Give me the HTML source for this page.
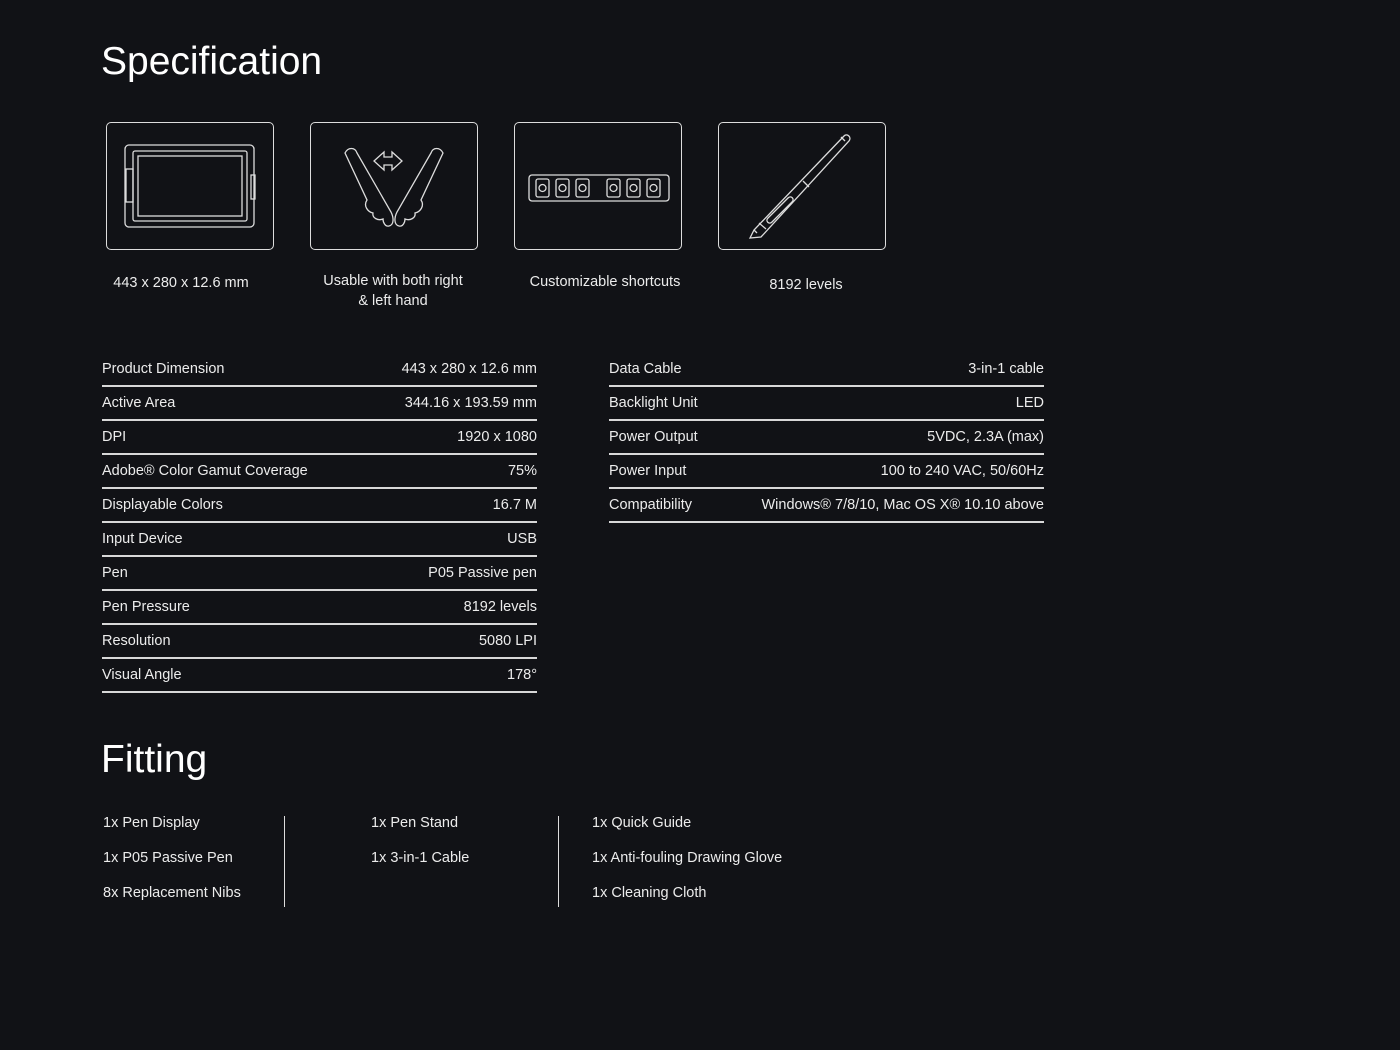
<!DOCTYPE html>
<html><head><meta charset="utf-8"><style>
body{margin:0;background:#111216;width:1400px;height:1050px;position:relative;overflow:hidden;font-family:"Liberation Sans",sans-serif;color:#ececec}
h1{position:absolute;margin:0;font-weight:400;font-size:39px;color:#fff;line-height:1}
.box{position:absolute;top:122px;width:166px;height:126px;border:1.5px solid #ddd;border-radius:5px}
.cap{position:absolute;font-size:14.5px;text-align:center;width:200px;line-height:20px}
.tbl{position:absolute;width:435px}
.row{height:32px;border-bottom:2px solid #d8d8d8;display:flex;justify-content:space-between;align-items:center;font-size:14.5px}
.fit{position:absolute;font-size:14.5px;line-height:35px}
.vl{position:absolute;width:1px;background:#ddd;top:816px;height:91px}
</style></head><body>
<h1 style="left:101px;top:42px">Specification</h1>

<div class="box" style="left:106px"><svg width="166" height="126" fill="none" stroke="#ddd" stroke-width="1.3">
<rect x="18" y="22" width="129" height="82" rx="4"/><rect x="26" y="28" width="114" height="70" rx="2"/><rect x="31" y="33" width="104" height="60"/>
<rect x="19" y="46" width="7" height="33"/><rect x="144" y="52" width="4" height="24"/></svg></div>
<div class="box" style="left:310px"><svg width="166" height="126" fill="none" stroke="#ddd" stroke-width="1.3">
<path d="M34 30c3-6 10-6 12 0l34 59c3 6 3 13-2 14c-4 1-6-4-6-7c-5 2-11-1-10-6c-5-1-10-7-6-13z"/>
<path d="M132 30c-3-6-10-6-12 0l-34 59c-3 6-3 13 2 14c4 1 6-4 6-7c5 2 11-1 10-6c5-1 10-7 6-13z"/>
<path d="M63 38l10-9v5h8v-5l10 9l-10 9v-5h-8v5z"/></svg></div>
<div class="box" style="left:514px"><svg width="166" height="126" fill="none" stroke="#ddd" stroke-width="1.3">
<rect x="14" y="52" width="140" height="26" rx="3"/>
<g><rect x="21" y="56" width="13" height="18" rx="2"/><circle cx="27.5" cy="65" r="3.5"/>
<rect x="41" y="56" width="13" height="18" rx="2"/><circle cx="47.5" cy="65" r="3.5"/>
<rect x="61" y="56" width="13" height="18" rx="2"/><circle cx="67.5" cy="65" r="3.5"/>
<rect x="92" y="56" width="13" height="18" rx="2"/><circle cx="98.5" cy="65" r="3.5"/>
<rect x="112" y="56" width="13" height="18" rx="2"/><circle cx="118.5" cy="65" r="3.5"/>
<rect x="132" y="56" width="13" height="18" rx="2"/><circle cx="138.5" cy="65" r="3.5"/></g></svg></div>
<div class="box" style="left:718px"><svg width="166" height="126" fill="none" stroke="#ddd" stroke-width="1.3">
<path d="M31 115l4-8l90-94c3-3 8 1 5 5l-88 96z"/><path d="M35 107l3 3"/><path d="M40 100l7 6"/><path d="M84 58l6 6"/>
<path d="M49 95l20-20c3-3 7 1 4 4l-20 20c-3 3-7-1-4-4z"/><path d="M122 14l4 4"/></svg></div>

<div class="cap" style="left:81px;top:273px">443 x 280 x 12.6 mm</div>
<div class="cap" style="left:293px;top:271px">Usable with both right<br>&amp; left hand</div>
<div class="cap" style="left:505px;top:272px">Customizable shortcuts</div>
<div class="cap" style="left:706px;top:275px">8192 levels</div>

<div class="tbl" style="left:102px;top:353px">
<div class="row"><span>Product Dimension</span><span>443 x 280 x 12.6 mm</span></div>
<div class="row"><span>Active Area</span><span>344.16 x 193.59 mm</span></div>
<div class="row"><span>DPI</span><span>1920 x 1080</span></div>
<div class="row"><span>Adobe® Color Gamut Coverage</span><span>75%</span></div>
<div class="row"><span>Displayable Colors</span><span>16.7 M</span></div>
<div class="row"><span>Input Device</span><span>USB</span></div>
<div class="row"><span>Pen</span><span>P05 Passive pen</span></div>
<div class="row"><span>Pen Pressure</span><span>8192 levels</span></div>
<div class="row"><span>Resolution</span><span>5080 LPI</span></div>
<div class="row"><span>Visual Angle</span><span>178°</span></div>
</div>
<div class="tbl" style="left:609px;top:353px">
<div class="row"><span>Data Cable</span><span>3-in-1 cable</span></div>
<div class="row"><span>Backlight Unit</span><span>LED</span></div>
<div class="row"><span>Power Output</span><span>5VDC, 2.3A (max)</span></div>
<div class="row"><span>Power Input</span><span>100 to 240 VAC, 50/60Hz</span></div>
<div class="row"><span>Compatibility</span><span>Windows® 7/8/10, Mac OS X® 10.10 above</span></div>
</div>

<h1 style="left:101px;top:740px">Fitting</h1>
<div class="fit" style="left:103px;top:806px">1x Pen Display<br>1x P05 Passive Pen<br>8x Replacement Nibs</div>
<div class="vl" style="left:284px"></div>
<div class="fit" style="left:371px;top:806px">1x Pen Stand<br>1x 3-in-1 Cable</div>
<div class="vl" style="left:558px"></div>
<div class="fit" style="left:592px;top:806px">1x Quick Guide<br>1x Anti-fouling Drawing Glove<br>1x Cleaning Cloth</div>
</body></html>
